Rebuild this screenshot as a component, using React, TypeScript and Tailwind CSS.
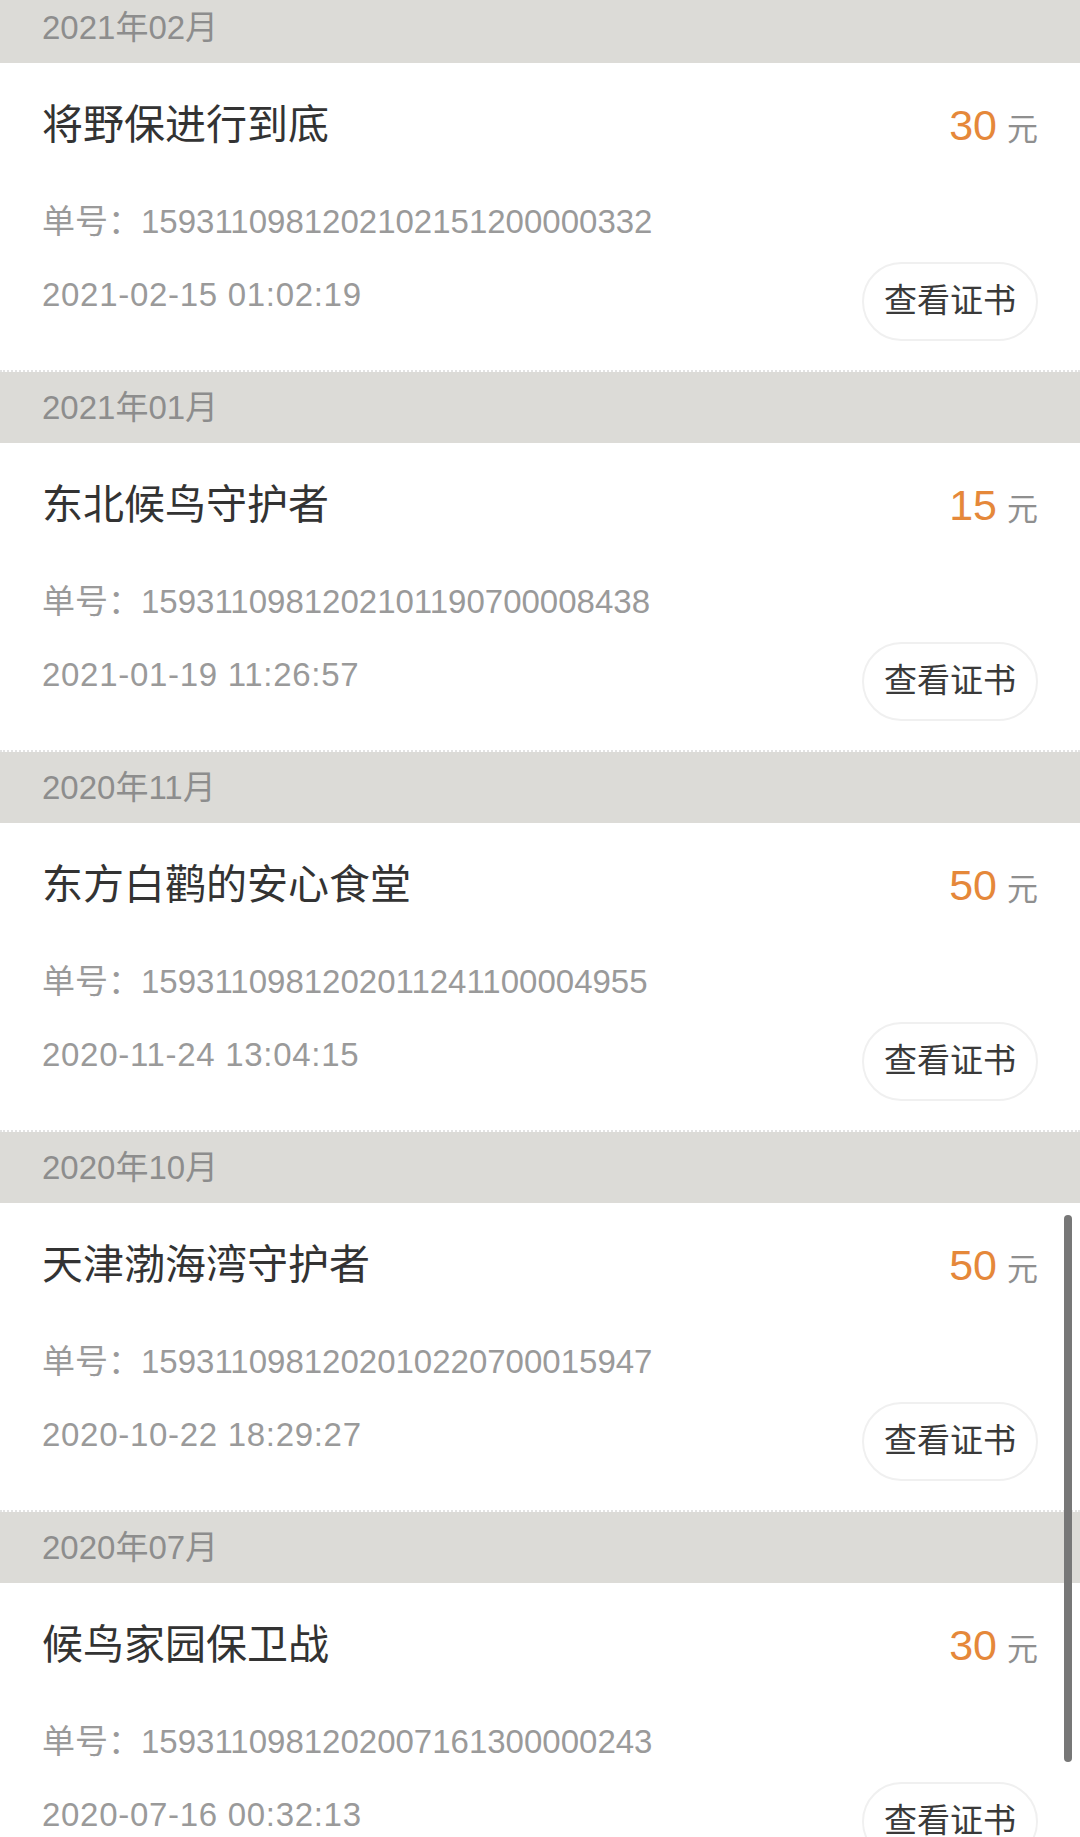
const records = [
  {
    month: "2021年02月",
    title: "将野保进行到底",
    amount: "30",
    no: "1593110981202102151200000332",
    time: "2021-02-15 01:02:19",
  },
  {
    month: "2021年01月",
    title: "东北候鸟守护者",
    amount: "15",
    no: "1593110981202101190700008438",
    time: "2021-01-19 11:26:57",
  },
  {
    month: "2020年11月",
    title: "东方白鹳的安心食堂",
    amount: "50",
    no: "1593110981202011241100004955",
    time: "2020-11-24 13:04:15",
  },
  {
    month: "2020年10月",
    title: "天津渤海湾守护者",
    amount: "50",
    no: "1593110981202010220700015947",
    time: "2020-10-22 18:29:27",
  },
  {
    month: "2020年07月",
    title: "候鸟家园保卫战",
    amount: "30",
    no: "1593110981202007161300000243",
    time: "2020-07-16 00:32:13",
  },
];

type Record = (typeof records)[number];

const RecordCard = ({ r }: { r: Record }) => {
  return (
    <section>
      <div className="h-[71px] px-[42px] flex items-center bg-[#dcdbd7] text-[33px] text-[#8d8d8d]">
        {r.month}
      </div>
      <div className="h-[309px] pl-[42px] pr-[42px] pt-[38px] bg-white border-b-2 border-dotted border-[#e2e2e2]">
        <div className="h-[48px] flex items-center justify-between">
          <h2 className="text-[41px] text-[#333] leading-none">{r.title}</h2>
          <div className="flex items-baseline gap-x-[10px] leading-none">
            <span className="text-[43px] text-[#e5883a]">{r.amount}</span>
            <span className="text-[31px] text-[#8f8f8f]">元</span>
          </div>
        </div>
        <p className="mt-[53px] h-[40px] flex items-center text-[33px] text-[#9a9a9a]">
          单号：{r.no}
        </p>
        <div className="mt-[20px] h-[78px] flex items-center justify-between">
          <span className="pb-[12px] text-[33px] tracking-[0.7px] text-[#9a9a9a]">{r.time}</span>
          <button className="h-[79px] w-[176px] rounded-full border-2 border-[#f0f0f0] bg-white text-[33px] text-[#3a3a3a]">
            查看证书
          </button>
        </div>
      </div>
    </section>
  );
};

const App = () => {
  return (
    <div className="relative h-[1837px] w-[1080px] overflow-hidden bg-white font-['Liberation_Sans','Noto_Sans_CJK_SC',sans-serif]">
      <div className="-mt-[8px] flex flex-col">
        {records.map((r) => (
          <RecordCard key={r.no} r={r} />
        ))}
      </div>
      <div className="absolute right-[8px] top-[1215px] h-[547px] w-[8px] rounded-full bg-[#777]" />
    </div>
  );
};

export default App;
